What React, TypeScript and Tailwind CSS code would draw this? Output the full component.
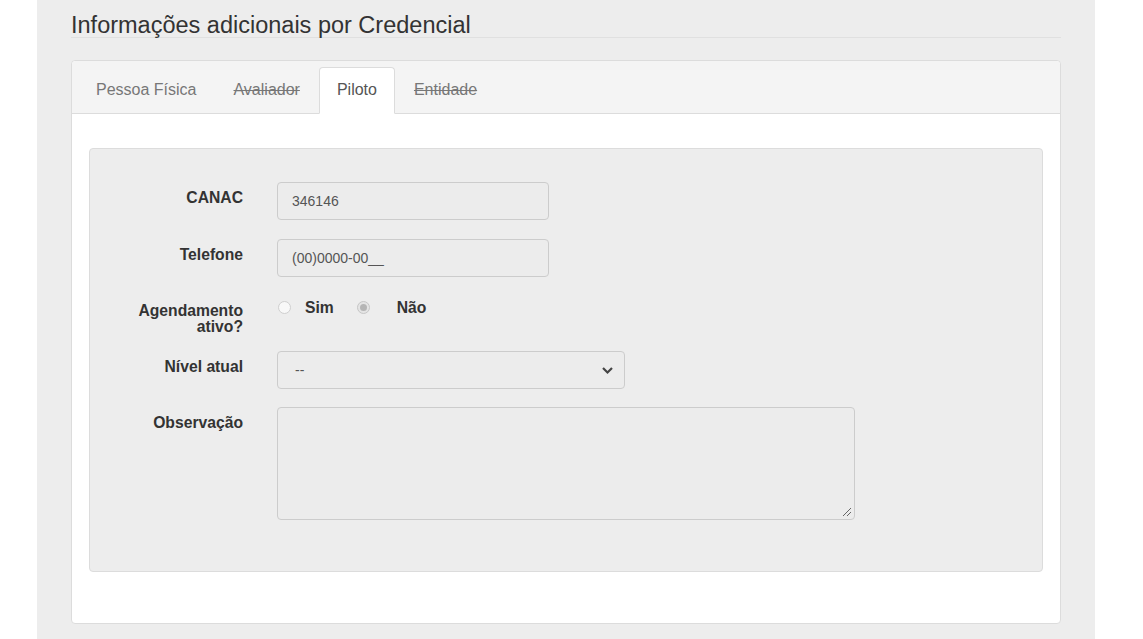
import { useState } from "react";

const tabs = [
  { label: "Pessoa Física", off: false },
  { label: "Avaliador", off: true },
  { label: "Piloto", off: false, active: true },
  { label: "Entidade", off: true },
];

const Row = ({
  label,
  children,
  tall,
}: {
  label: React.ReactNode;
  children: React.ReactNode;
  tall?: boolean;
}) => (
  <div className={"flex items-start " + (tall ? "h-[36px]" : "")}>
    <label
      className={
        "w-[153px] shrink-0 text-right font-bold text-[15.7px] text-[#333] " +
        (tall ? "leading-[16px] pt-[7px]" : "leading-[17px] pt-[7px]")
      }
    >
      {label}
    </label>
    <div className="ml-[34px] flex-1">{children}</div>
  </div>
);

const Radio = ({ checked, disabled }: { checked?: boolean; disabled?: boolean }) => (
  <span
    className={
      "w-[13px] h-[13px] rounded-full border flex items-center justify-center " +
      (disabled ? "border-[#c6c6c6] bg-[#e4e4e4]" : "border-[#cfcfcf] bg-[#f8f8f8]")
    }
  >
    {checked && <span className="w-[7px] h-[7px] rounded-full bg-[#b5b5b5]" />}
  </span>
);

export default function App() {
  const [canac] = useState("346146");
  return (
    <div
      className="w-full min-h-[639px] bg-white"
      style={{ fontFamily: '"Liberation Sans", Arial, sans-serif' }}
    >
      <div className="w-[1058px] min-h-[639px] bg-[#ededed] px-[34px] ml-[37px]">
        <h2 className="text-[23.5px] leading-[24px] pt-[13px] text-[#333] border-b border-[#e0e0e0]">
          Informações adicionais por Credencial
        </h2>

        <div className="mt-[22px] bg-white border border-[#dcdcdc] rounded-[4px] h-[564px] flex flex-col">
          <div className="h-[53px] bg-[#f4f4f4] border-b border-[#dcdcdc] rounded-t-[4px] flex items-end pl-[6px] gap-[1px]">
            {tabs.map((t) => (
              <div
                key={t.label}
                className={
                  "px-[17px] h-[47px] flex items-center text-[16px] mb-[-1px] pb-[1px] " +
                  (t.active
                    ? "bg-white border border-[#dcdcdc] border-b-white rounded-t-[4px] text-[#555]"
                    : "text-[#777] border border-transparent") +
                  (t.off ? " line-through" : "")
                }
              >
                {t.label}
              </div>
            ))}
          </div>

          <div className="px-[17px] pt-[34px]">
            <div className="h-[424px] bg-[#ededed] border border-[#dcdcdc] rounded-[4px] pt-[33px] flex flex-col gap-[19px]">
              <Row label="CANAC">
                <div className="w-[272px] h-[38px] border border-[#cccccc] rounded-[4px] bg-[#ececec] px-[14px] flex items-center text-[14px] text-[#555]">
                  {canac}
                </div>
              </Row>
              <Row label="Telefone">
                <div className="w-[272px] h-[38px] border border-[#cccccc] rounded-[4px] bg-[#ececec] px-[14px] flex items-center text-[14px] text-[#555]">
                  (00)0000-00__
                </div>
              </Row>
              <Row
                tall
                label={
                  <>
                    Agendamento
                    <br />
                    ativo?
                  </>
                }
              >
                <div className="h-[36px] flex items-start pt-[4px]">
                  <div className="flex items-center ml-[1px] h-[13px] mt-[1px]">
                    <Radio />
                    <span className="ml-[14px] font-bold text-[15.7px] text-[#333]">Sim</span>
                  </div>
                  <div className="flex items-center ml-[23px] h-[13px] mt-[1px]">
                    <Radio checked disabled />
                    <span className="ml-[27px] font-bold text-[15.7px] text-[#333]">Não</span>
                  </div>
                </div>
              </Row>
              <Row label="Nível atual">
                <div className="w-[348px] h-[38px] border border-[#cccccc] rounded-[4px] bg-[#ececec] pl-[17px] pr-[10px] flex items-center justify-between text-[14px] text-[#555]">
                  <span>--</span>
                  <svg width="13" height="9" viewBox="0 0 13 9">
                    <path d="M2 2 L6.5 6.5 L11 2" fill="none" stroke="#444" strokeWidth="2.2" />
                  </svg>
                </div>
              </Row>
              <div className="mt-[-1px]">
                <Row label="Observação">
                  <div className="relative w-[578px] h-[113px] border border-[#cccccc] rounded-[4px] bg-[#ececec]">
                    <svg width="10" height="10" viewBox="0 0 10 10" className="absolute right-[2px] bottom-[2px]">
                      <path d="M1 9 L9 1 M5 9 L9 5" stroke="#666" strokeWidth="1" />
                    </svg>
                  </div>
                </Row>
              </div>
            </div>
          </div>
        </div>
      </div>
    </div>
  );
}
